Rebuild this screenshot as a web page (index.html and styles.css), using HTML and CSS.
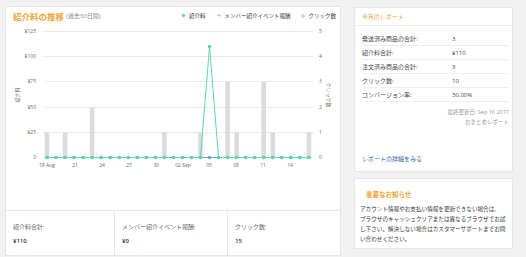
FILE: index.html
```html
<!DOCTYPE html>
<html>
<head>
  <meta charset="utf-8">
  <link rel="stylesheet" href="styles.css">
</head>
<body>
  <div class="page">
    <div class="panel">
      <div class="panel-head">
        <span class="title">紹介料の推移</span>
        <span class="sub">(過去30日間)</span>
        <div class="legend">
          <span class="item"><i class="mk diamond"></i>紹介料</span>
          <span class="item"><i class="mk plus">+</i>メンバー紹介イベント報酬</span>
          <span class="item"><i class="mk dot"></i>クリック数</span>
        </div>
      </div>

      <svg class="chart" id="chart" width="334" height="186" viewBox="6 24 334 186">
        <g stroke="#e9e9e9" stroke-width="1">
          <line x1="43" x2="313" y1="31.5" y2="31.5"/>
          <line x1="43" x2="313" y1="56.5" y2="56.5"/>
          <line x1="43" x2="313" y1="81.5" y2="81.5"/>
          <line x1="43" x2="313" y1="107.5" y2="107.5"/>
          <line x1="43" x2="313" y1="132.5" y2="132.5"/>
          <line x1="43" x2="313" y1="157.5" y2="157.5"/>
        </g>
        <g class="axis" text-anchor="end">
          <text x="36" y="33">¥125</text>
          <text x="36" y="58">¥100</text>
          <text x="36" y="83">¥75</text>
          <text x="36" y="109">¥50</text>
          <text x="36" y="134">¥25</text>
          <text x="36" y="159">0</text>
        </g>
        <g class="axis">
          <text x="319" y="33">5</text>
          <text x="319" y="58">4</text>
          <text x="319" y="83">3</text>
          <text x="319" y="109">2</text>
          <text x="319" y="134">1</text>
          <text x="319" y="159">0</text>
        </g>
        <g class="axis" text-anchor="middle">
          <text x="47" y="167">18 Aug</text>
          <text x="75" y="167">21</text>
          <text x="102" y="167">24</text>
          <text x="129" y="167">27</text>
          <text x="156" y="167">30</text>
          <text x="183" y="167">02 Sep</text>
          <text x="209" y="167">05</text>
          <text x="236" y="167">08</text>
          <text x="263" y="167">11</text>
          <text x="290" y="167">14</text>
          <text transform="translate(19,95) rotate(-90)">紹介料</text>
          <text transform="translate(327,95) rotate(90)">クリック数</text>
        </g>
        <g id="bars" fill="#dcdcdc"></g>
        <g id="lines"></g>
      </svg>

      <div class="stats">
        <div class="stat">
          <div class="stat-label">紹介料合計:</div>
          <div class="stat-value">¥110</div>
        </div>
        <div class="stat">
          <div class="stat-label">メンバー紹介イベント報酬:</div>
          <div class="stat-value">¥0</div>
        </div>
        <div class="stat">
          <div class="stat-label">クリック数:</div>
          <div class="stat-value">15</div>
        </div>
      </div>
    </div>

    <div class="side">
      <div class="card report">
        <div class="report-head">今月のレポート</div>
        <div class="rows">
          <div class="row"><span class="row-label">発送済み商品の合計:</span><span>3</span></div>
          <div class="row"><span class="row-label">紹介料合計:</span><span>¥110</span></div>
          <div class="row"><span class="row-label">注文済み商品の合計:</span><span>3</span></div>
          <div class="row"><span class="row-label">クリック数:</span><span>10</span></div>
          <div class="row"><span class="row-label">コンバージョン率:</span><span>30.00%</span></div>
        </div>
        <div class="updated">
          最終更新日: Sep 16 2017<br>
          おまとめレポート
        </div>
        <a class="more" href="#">レポートの詳細をみる</a>
      </div>

      <div class="card notice">
        <div class="notice-title">重要なお知らせ</div>
        <p class="notice-text">アカウント情報やお支払い情報を更新できない場合は、<br>ブラウザのキャッシュクリアまたは異なるブラウザでお試<br>し下さい。解決しない場合はカスタマーサポートまでお問<br>い合わせください。</p>
      </div>
    </div>
  </div>

  <script>
    const NS = 'http://www.w3.org/2000/svg';
    const clicks = {0:1, 2:1, 5:2, 13:1, 17:1, 20:3, 21:1, 24:3, 25:1, 29:1};
    const fee = {18:110};
    const dayX = i => 47 + i * 9.03;
    const feeY = v => 157.5 - v * 126 / 125;
    const clickY = c => 157.5 - c * 25.2;

    function el(tag, attrs, parent) {
      const e = document.createElementNS(NS, tag);
      for (const k in attrs) e.setAttribute(k, attrs[k]);
      parent.appendChild(e);
      return e;
    }

    const bars = document.getElementById('bars');
    for (const i in clicks) {
      const y = clickY(clicks[i]);
      el('rect', {x: dayX(i) - 2.3, y: y, width: 4.6, height: 157.5 - y}, bars);
    }

    const lines = document.getElementById('lines');
    let memberPts = [], feePts = [];
    for (let i = 0; i < 30; i++) {
      memberPts.push(dayX(i) + ',' + feeY(0));
      feePts.push(dayX(i) + ',' + feeY(fee[i] || 0));
    }
    el('polyline', {points: memberPts.join(' '), fill: 'none', stroke: '#6f9fd8', 'stroke-width': 1}, lines);
    for (let i = 0; i < 30; i++) {
      el('circle', {cx: dayX(i), cy: feeY(0), r: 1.8, fill: '#6f9fd8'}, lines);
    }
    el('polyline', {points: feePts.join(' '), fill: 'none', stroke: '#5fd6ad', 'stroke-width': 1}, lines);
    for (let i = 0; i < 30; i++) {
      if (i === 18) continue;
      el('circle', {cx: dayX(i), cy: feeY(fee[i] || 0), r: 1.8, fill: '#5fd6ad'}, lines);
    }
    el('circle', {cx: dayX(18), cy: feeY(110), r: 1.8, fill: '#5fd6ad'}, lines);
  </script>
</body>
</html>
```

FILE: styles.css
```css
body{
  margin:0;
  background-color:#f1f1f1;
  font-family:"Open Sans","Noto Sans CJK JP",sans-serif;
  color:#333;
}
.page{
  display:flex;
  align-items:flex-start;
  gap:13px;
  padding:6px 0 0 5px;
}
.panel{
  width:336px;
  height:250px;
  box-sizing:border-box;
  background-color:#fff;
  border:1px solid #e6e6e6;
  display:flex;
  flex-direction:column;
}
.panel-head{
  height:17px;
  display:flex;
  align-items:center;
  padding:0 4px 0 7px;
}
.title{
  font-size:8.5px;
  font-weight:bold;
  color:#f0a232;
}
.sub{
  font-size:6px;
  color:#888;
  margin-left:2px;
}
.legend{
  margin-left:auto;
  display:flex;
  gap:11px;
  font-size:5.5px;
  color:#333;
}
.item{
  display:flex;
  align-items:center;
  gap:3px;
}
.mk{
  display:block;
  width:4px;
  height:4px;
}
.diamond{
  width:3px;
  height:3px;
  margin:0 0.5px;
  background-color:#5fd6ad;
  transform:rotate(45deg);
}
.plus{
  width:5px;
  font-style:normal;
  font-size:7px;
  line-height:4px;
  color:#6f9fd8;
  text-align:center;
}
.dot{
  border-radius:50%;
  background-color:#d6d6d6;
}
.chart{
  display:block;
}
.axis{
  font-size:5px;
  fill:#666;
}
.stats{
  flex:1;
  display:flex;
  border-top:1px solid #e6e6e6;
}
.stat{
  box-sizing:border-box;
  padding:11px 0 0 7px;
  font-size:6px;
  line-height:10px;
}
.stat:nth-child(1){ width:108px; }
.stat:nth-child(2){ width:113px; border-left:1px solid #e6e6e6; }
.stat:nth-child(3){ flex:1; border-left:1px solid #e6e6e6; }
.stat-label{
  color:#666;
}
.stat-value{
  margin-top:4px;
  font-weight:600;
  color:#333;
}
.side{
  width:159px;
  margin-top:1px;
  display:flex;
  flex-direction:column;
  gap:6px;
}
.card{
  box-sizing:border-box;
  background-color:#fff;
  border:1px solid #e6e6e6;
}
.report{
  height:165px;
  display:flex;
  flex-direction:column;
  font-size:6px;
}
.report-head{
  box-sizing:border-box;
  height:18px;
  border-bottom:1px solid #eee;
  padding-left:7px;
  display:flex;
  align-items:center;
  color:#f0a232;
}
.rows{
  padding:6px 4px 0 7px;
}
.row{
  box-sizing:border-box;
  height:14px;
  display:flex;
  align-items:center;
  border-bottom:1px solid #eee;
  color:#444;
}
.row-label{
  width:90px;
}
.updated{
  margin-top:5px;
  padding-right:3px;
  text-align:right;
  font-size:5.5px;
  line-height:10px;
  color:#999;
}
.more{
  margin-top:auto;
  padding:0 0 7px 7px;
  line-height:10px;
  color:#2e6da4;
  text-decoration:none;
}
.notice{
  height:71px;
  padding:11px 0 5px 5px;
}
.notice-title{
  padding-left:6px;
  font-size:6.5px;
  line-height:10px;
  font-weight:bold;
  color:#f0a232;
}
.notice-text{
  margin:4px 0 0;
  font-size:5.6px;
  line-height:10px;
  white-space:nowrap;
  color:#333;
}
```
